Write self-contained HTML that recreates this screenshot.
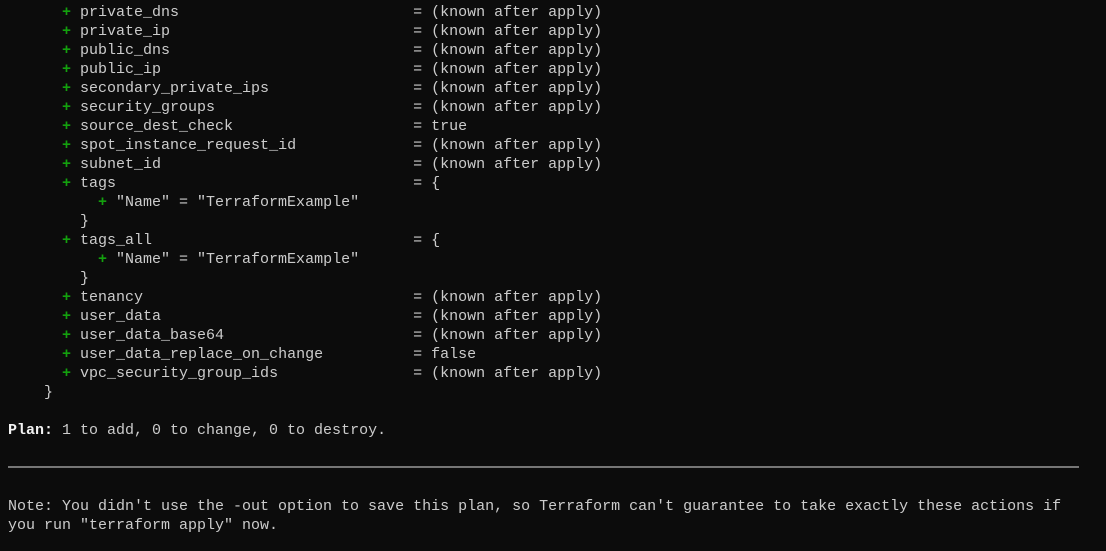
<!DOCTYPE html>
<html><head><meta charset="utf-8"><style>
html,body{margin:0;padding:0;background:#0c0c0c;width:1106px;height:551px;overflow:hidden}
pre{margin:0;position:absolute;left:8px;top:3px;font-family:"Liberation Mono",monospace;font-size:15px;line-height:19px;color:#cccccc;letter-spacing:0}
.g{color:#13a10e;font-weight:bold}
b{color:#f2f2f2}
.hr{position:absolute;left:8px;top:466px;width:1071px;height:2px;background:#767676}
</style></head><body>
<pre>      <span class="g">+</span> private_dns                          = (known after apply)
      <span class="g">+</span> private_ip                           = (known after apply)
      <span class="g">+</span> public_dns                           = (known after apply)
      <span class="g">+</span> public_ip                            = (known after apply)
      <span class="g">+</span> secondary_private_ips                = (known after apply)
      <span class="g">+</span> security_groups                      = (known after apply)
      <span class="g">+</span> source_dest_check                    = true
      <span class="g">+</span> spot_instance_request_id             = (known after apply)
      <span class="g">+</span> subnet_id                            = (known after apply)
      <span class="g">+</span> tags                                 = {
          <span class="g">+</span> "Name" = "TerraformExample"
        }
      <span class="g">+</span> tags_all                             = {
          <span class="g">+</span> "Name" = "TerraformExample"
        }
      <span class="g">+</span> tenancy                              = (known after apply)
      <span class="g">+</span> user_data                            = (known after apply)
      <span class="g">+</span> user_data_base64                     = (known after apply)
      <span class="g">+</span> user_data_replace_on_change          = false
      <span class="g">+</span> vpc_security_group_ids               = (known after apply)
    }

<b>Plan:</b> 1 to add, 0 to change, 0 to destroy.



Note: You didn't use the -out option to save this plan, so Terraform can't guarantee to take exactly these actions if
you run "terraform apply" now.</pre>
<div class="hr"></div>
</body></html>
